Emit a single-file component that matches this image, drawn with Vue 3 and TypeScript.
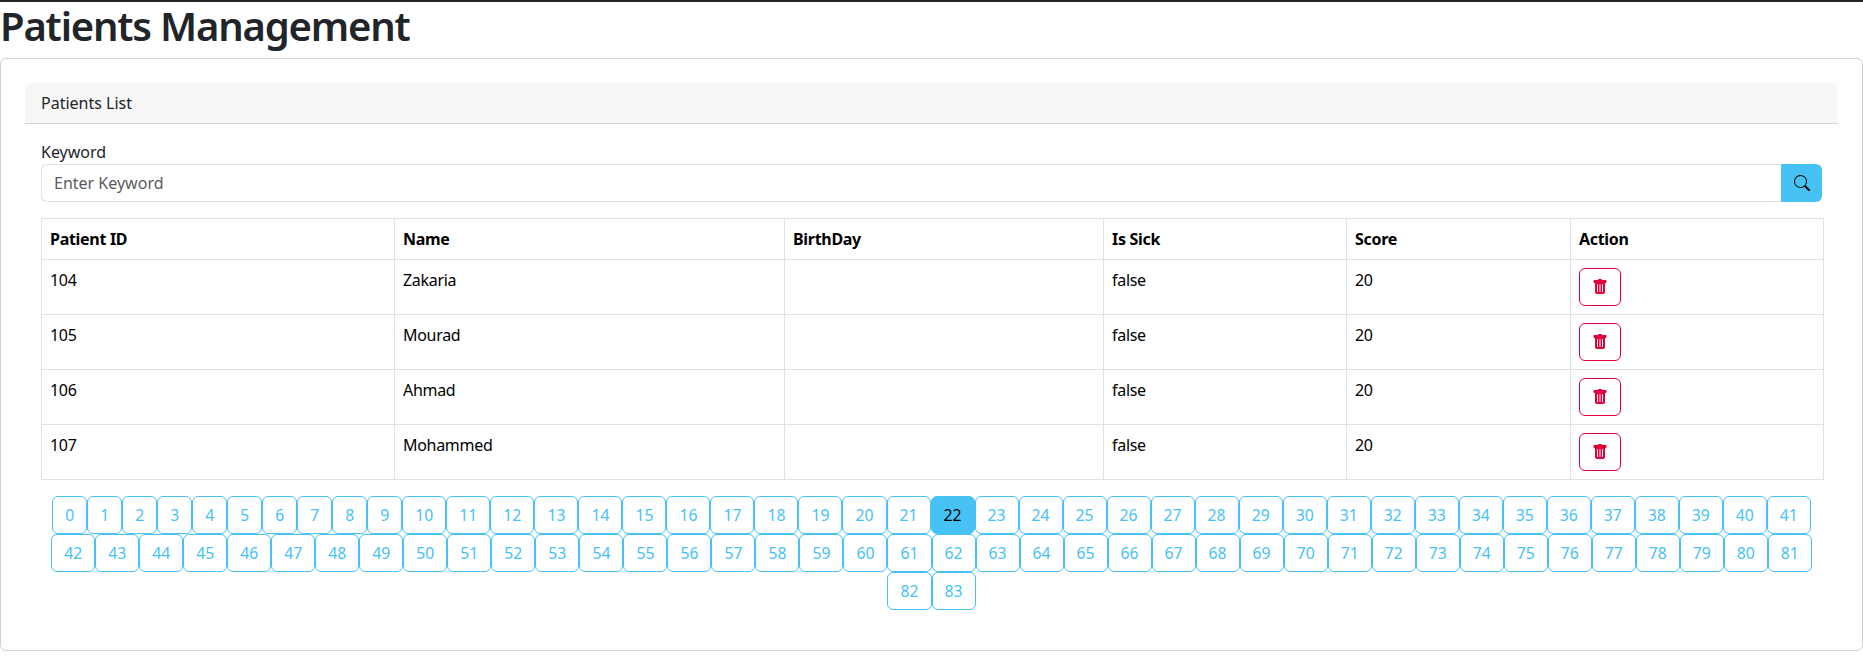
<template>
  <div class="page">
    <h1 class="title">Patients Management</h1>
    <div class="outer-card">
      <div class="inner-card">
        <div class="card-head">Patients List</div>
        <div class="card-body">
          <form class="search" @submit.prevent>
            <label class="search-label" for="keyword">Keyword</label>
            <div class="input-group">
              <input id="keyword" v-model="keyword" class="search-input" type="text" placeholder="Enter Keyword" />
              <button class="search-btn" type="submit" aria-label="Search">
                <svg width="16" height="16" viewBox="0 0 16 16" fill="currentColor">
                  <path d="M11.742 10.344a6.5 6.5 0 1 0-1.397 1.398h-.001c.03.04.062.078.098.115l3.85 3.85a1 1 0 0 0 1.415-1.414l-3.85-3.85a1.007 1.007 0 0 0-.115-.1zM12 6.5a5.5 5.5 0 1 1-11 0 5.5 5.5 0 0 1 11 0z" />
                </svg>
              </button>
            </div>
          </form>

          <table class="patients">
            <thead>
              <tr>
                <th v-for="col in columns" :key="col.label" :style="{ width: col.width + 'px' }">{{ col.label }}</th>
              </tr>
            </thead>
            <tbody>
              <tr v-for="p in patients" :key="p.id">
                <td>{{ p.id }}</td>
                <td>{{ p.name }}</td>
                <td></td>
                <td>{{ p.sick }}</td>
                <td>{{ p.score }}</td>
                <td>
                  <button class="delete-btn" type="button" aria-label="Delete">
                    <svg width="16" height="16" viewBox="0 0 16 16" fill="currentColor">
                      <path d="M2.5 1a1 1 0 0 0-1 1v1a1 1 0 0 0 1 1H3v9a2 2 0 0 0 2 2h6a2 2 0 0 0 2-2V4h.5a1 1 0 0 0 1-1V2a1 1 0 0 0-1-1H10a1 1 0 0 0-1-1H7a1 1 0 0 0-1 1H2.5zm3 4a.5.5 0 0 1 .5.5v7a.5.5 0 0 1-1 0v-7a.5.5 0 0 1 .5-.5zM8 5a.5.5 0 0 1 .5.5v7a.5.5 0 0 1-1 0v-7A.5.5 0 0 1 8 5zm3 .5v7a.5.5 0 0 1-1 0v-7a.5.5 0 0 1 1 0z" />
                    </svg>
                  </button>
                </td>
              </tr>
            </tbody>
          </table>

          <div class="pager">
            <button
              v-for="n in pageCount"
              :key="n"
              class="page-btn"
              :class="{ active: n - 1 === currentPage }"
              type="button"
              @click="currentPage = n - 1"
            >{{ n - 1 }}</button>
          </div>
        </div>
      </div>
    </div>
  </div>
</template>

<script setup lang="ts">
import { ref } from 'vue';

interface Patient {
  id: number;
  name: string;
  sick: boolean;
  score: number;
}

const keyword = ref<string>('');
const currentPage = ref<number>(22);
const pageCount = 84;

const columns = [
  { label: 'Patient ID', width: 353 },
  { label: 'Name', width: 390 },
  { label: 'BirthDay', width: 319 },
  { label: 'Is Sick', width: 243 },
  { label: 'Score', width: 224 },
  { label: 'Action', width: 253 },
];

const patients: Patient[] = [
  { id: 104, name: 'Zakaria', sick: false, score: 20 },
  { id: 105, name: 'Mourad', sick: false, score: 20 },
  { id: 106, name: 'Ahmad', sick: false, score: 20 },
  { id: 107, name: 'Mohammed', sick: false, score: 20 },
];
</script>

<style scoped>
.page {
  border-top: 2px solid #212529;
  font-family: "Noto Sans", sans-serif;
  font-size: 16px;
  line-height: 24px;
  color: #212529;
}

.title {
  margin: 0 0 8px;
  font-size: 40px;
  line-height: 48px;
  font-weight: 600;
  letter-spacing: -1.2px;
}

.outer-card {
  height: 593px;
  box-sizing: border-box;
  padding: 24px;
  border: 1px solid #d0d0d0;
  border-radius: 6px;
}

.card-head {
  height: 41px;
  box-sizing: border-box;
  padding: 8px 16px;
  background: #f7f7f7;
  border-bottom: 1px solid #d4d4d8;
  border-radius: 6px 6px 0 0;
}

.card-body {
  padding: 16px;
}

.search-label {
  display: block;
}

.input-group {
  display: flex;
  height: 38px;
}

.search-input {
  flex: 1;
  min-width: 0;
  box-sizing: border-box;
  padding: 6px 12px;
  border: 1px solid #dee2e6;
  border-right: none;
  border-radius: 6px 0 0 6px;
  font: inherit;
  color: #212529;
  outline: none;
}

.search-input::placeholder {
  color: #595c5f;
}

.search-btn {
  width: 41px;
  border: none;
  border-radius: 0 6px 6px 0;
  background: #46c2f5;
  color: #000;
  display: flex;
  align-items: center;
  justify-content: center;
  padding: 0;
}

.patients {
  width: 100%;
  margin-top: 16px;
  border-collapse: collapse;
  table-layout: fixed;
  color: #000;
  letter-spacing: -0.3px;
}

.patients th,
.patients td {
  box-sizing: border-box;
  border: 1px solid #dee2e6;
  padding: 8px;
  text-align: left;
  vertical-align: top;
}

.patients th {
  font-weight: 700;
}

.delete-btn {
  width: 42px;
  height: 38px;
  display: flex;
  align-items: center;
  justify-content: center;
  padding: 0;
  background: #fff;
  border: 1px solid #e0003c;
  border-radius: 6px;
  color: #e0003c;
}

.pager {
  display: flex;
  flex-wrap: wrap;
  justify-content: center;
  margin-top: 16px;
}

.page-btn {
  height: 38px;
  box-sizing: border-box;
  padding: 0 12px;
  font-family: inherit;
  font-size: 15.74px;
  background: #fff;
  border: 1px solid #46c2f5;
  border-radius: 6px;
  color: #46c2f5;
}

.page-btn.active {
  background: #46c2f5;
  color: #000;
}
</style>
